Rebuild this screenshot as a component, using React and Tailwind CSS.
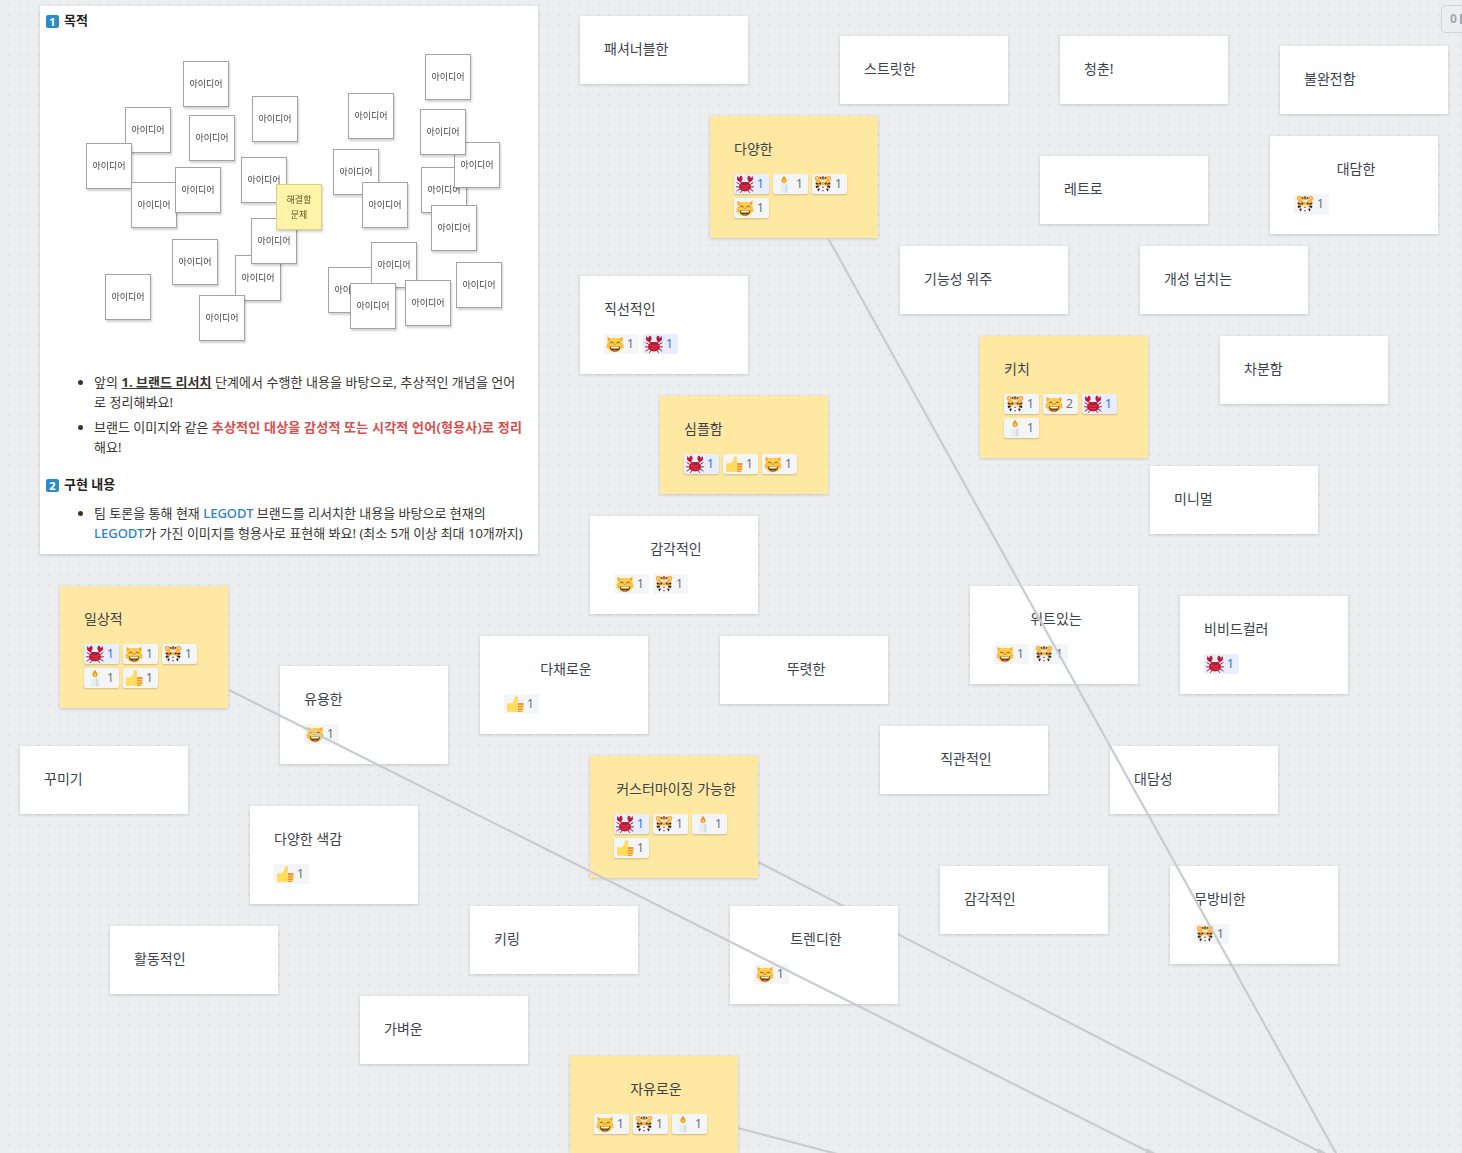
import React from 'react';

const Cat = () => (
  <svg viewBox="0 0 36 36" className="w-[18px] h-[18px] shrink-0">
    <path fill="#FFCC4D" d="M2 3 L4 20 L15 9 Z M34 3 L32 20 L21 9 Z" />
    <path fill="#F18F26" d="M4 6 L5 14 L11 9 Z M32 6 L31 14 L25 9 Z" />
    <ellipse cx="18" cy="20" rx="16" ry="14.5" fill="#FFCC4D" />
    <path fill="none" stroke="#664500" strokeWidth="1.8" strokeLinecap="round" d="M8 16c1.5-2.5 5-2.5 7 .5M28 16c-1.5-2.5-5-2.5-7 .5" />
    <path fill="#E75A70" d="M16 18.5h4l-2 2.2z" />
    <path fill="#664500" d="M7.5 22.5c3 1.5 18 1.5 21 0 0 7-5 10.5-10.5 10.5S7.500 29.500 7.500 22.500z" />
    <path fill="#fff" d="M9.500 23.500c4 .8 13 .8 17 0-.2 1.300-.6 2.300-1 3-4 .6-11 .6-15 0-.4-.7-.8-1.700-1-3z" />
    <path fill="#E8596E" d="M13 30.500c2.500-1.500 7.500-1.500 10 0-1.500 1.300-3.200 2-5 2s-3.500-.7-5-2z" />
    <path stroke="#F18F26" strokeWidth="1.200" strokeLinecap="round" d="M1 20l5 1.500M1 25l5-1M35 20l-5 1.500M35 25l-5-1" />
  </svg>
);

const Tiger = () => (
  <svg viewBox="0 0 36 36" className="w-[18px] h-[18px] shrink-0">
    <circle cx="6.500" cy="6.500" r="5" fill="#FFAC33" />
    <circle cx="29.500" cy="6.500" r="5" fill="#FFAC33" />
    <circle cx="6.500" cy="6.500" r="2.200" fill="#E1E8ED" />
    <circle cx="29.500" cy="6.500" r="2.200" fill="#E1E8ED" />
    <ellipse cx="18" cy="17" rx="14.500" ry="14.500" fill="#FFB347" />
    <path fill="#FFE8B6" d="M11 8c4-2 10-2 14 0l-2 6H13z" />
    <ellipse cx="18" cy="27.500" rx="9" ry="7.500" fill="#fff" />
    <path fill="#292F33" d="M16.500 3h3l-.5 6h-2zM11 5l3-1 1 6zM25 5l-3-1-1 6zM3.500 15l5 1.500 1.500 2.500-6.500-.5zM32.500 15l-5 1.500-1.500 2.500 6.500-.5zM3 22l5.500-1 1.500 2.500-5.500 3zM33 22l-5.500-1-1.500 2.500 5.500 3zM6.500 29l4-3 1 3-2.500 4zM29.500 29l-4-3-1 3 2.500 4z" />
    <circle cx="12.500" cy="17" r="2" fill="#292F33" />
    <circle cx="23.500" cy="17" r="2" fill="#292F33" />
    <path fill="#DD2E44" d="M15 23.500h6l-3 3zM15.500 30h5l-2.500 3.500z" />
  </svg>
);

const Crab = () => (
  <svg viewBox="0 0 36 36" className="w-[18px] h-[18px] shrink-0">
    <path fill="none" stroke="#BE1931" strokeWidth="2" strokeLinecap="round" d="M8 19L2 15.500M7 24l-6-.5M8 28l-6 4M28 19l6-3.500M29 24l6-.5M28 28l6 4M12 31l-3 4M24 31l3 4" />
    <path fill="none" stroke="#BE1931" strokeWidth="2.600" d="M12 18L8 11M24 18l4-7" />
    <path fill="#BE1931" d="M9 14C3 13 0 8 3.500 1.500c.5 2.500 1.500 4 3 4.500C7 4 8 2.500 10.500 1c3.500 3 4 9-1.500 13zM27 14c6-1 9-6 5.500-12.500-.5 2.500-1.500 4-3 4.500C29 4 28 2.500 25.500 1c-3.500 3-4 9 1.500 13z" />
    <ellipse cx="18" cy="23.500" rx="12" ry="9.500" fill="#BE1931" />
    <path fill="none" stroke="#E8596E" strokeWidth="1.300" d="M10 21c5 2 11 2 16 0M12 26.500c4 1.500 8 1.500 12 0" />
    <circle cx="14" cy="15.500" r="1.300" fill="#292F33" />
    <circle cx="22" cy="15.500" r="1.300" fill="#292F33" />
  </svg>
);

const Candle = () => (
  <svg viewBox="0 0 36 36" className="w-[18px] h-[18px] shrink-0">
    <path fill="#E6ECF1" d="M11 17h14v16c0 1.500-3 2.500-7 2.500s-7-1-7-2.500z" />
    <ellipse cx="18" cy="17" rx="7" ry="2.500" fill="#F5F8FA" />
    <path fill="#D5DEE4" d="M20 19h5v14c0 1-2 2-5 2.200z" />
    <path fill="#F4900C" d="M18 1c1 4 5 6 5 10.500 0 3-2.200 5-5 5s-5-2-5-5C13 7 17 5 18 1z" />
    <path fill="#FFCC4D" d="M18 7c.500 2 2.500 3 2.500 5.500 0 1.500-1 2.800-2.500 2.800s-2.500-1.300-2.500-2.800C15.500 10 17.500 9 18 7z" />
  </svg>
);

const Thumb = () => (
  <svg viewBox="0 0 36 36" className="w-[18px] h-[18px] shrink-0">
    <path fill="#FFDB5E" d="M2 19c0-1.500 1-2.500 2.500-2.500H10V34H5c-1.700 0-3-1.300-3-3zM10 17c4-2 7-6 7.500-11 .2-2 1-4 3-4 2.500 0 4 3 4 6 0 3-1 6-1.500 8H32c1.700 0 3 1.300 3 3v11c0 2.500-2 4-4 4H17c-3 0-5-1-7-2z" />
    <path fill="#EE9547" d="M24 16h9c1.300 0 2.300 1 2.300 2.300S34.300 20.500 33 20.500h-9zM24 22h10.500v1.800c0 .8-.7 1.400-1.500 1.400h-9zM24 27h10v1.500c0 .8-.7 1.500-1.500 1.500H24zM24 31.500h8.500c-.5 1.500-1.800 2.500-3.500 2.500h-5z" />
  </svg>
);

const emoji = { cat: Cat, tiger: Tiger, crab: Crab, candle: Candle, thumb: Thumb };

const Reaction = ({ type, count, flat }) => {
  const Icon = emoji[type];
  const isMine = type === 'crab';
  return (
    <div
      className={`flex items-center gap-[3px] w-[35px] h-[20px] pl-[2px] rounded-[2px] text-[12px] leading-none ${
        isMine ? 'bg-[#e9eeff] text-[#2f6fe4]' : 'bg-[#f3f5f7] text-[#6b7079]'
      } ${flat ? '' : 'shadow-[0_1px_2px_rgba(0,0,0,0.2)]'}`}
    >
      <Icon />
      <span>{count}</span>
    </div>
  );
};

const Note = ({ pos, title, center, yellow, reactions }) => (
  <div
    className={`absolute w-[168px] px-[24px] pt-[23px] shadow-[0_1px_3px_rgba(0,0,0,0.16)] ${pos} ${
      yellow ? 'bg-[#ffe8a1]' : 'bg-white'
    } ${reactions ? 'pb-[20px]' : 'pb-[25px]'}`}
  >
    <p className={`text-[14px] leading-[20px] text-[#3c424c] ${center ? 'text-center whitespace-nowrap translate-x-[2px]' : ''}`}>{title}</p>
    {reactions && (
      <div className="flex flex-wrap gap-[4px] mt-[15px]">
        {reactions.map(([type, count]) => (
          <Reaction key={type} type={type} count={count} flat={!yellow} />
        ))}
      </div>
    )}
  </div>
);

const notes = [
  { pos: 'left-[580px] top-[16px]', title: '패셔너블한' },
  { pos: 'left-[840px] top-[36px]', title: '스트릿한' },
  { pos: 'left-[1060px] top-[36px]', title: '청춘!' },
  { pos: 'left-[1280px] top-[46px]', title: '불완전함' },
  { pos: 'left-[710px] top-[116px]', title: '다양한', yellow: true, reactions: [['crab', 1], ['candle', 1], ['tiger', 1], ['cat', 1]] },
  { pos: 'left-[1270px] top-[136px]', title: '대담한', center: true, reactions: [['tiger', 1]] },
  { pos: 'left-[1040px] top-[156px]', title: '레트로' },
  { pos: 'left-[900px] top-[246px]', title: '기능성 위주' },
  { pos: 'left-[1140px] top-[246px]', title: '개성 넘치는' },
  { pos: 'left-[580px] top-[276px]', title: '직선적인', reactions: [['cat', 1], ['crab', 1]] },
  { pos: 'left-[980px] top-[336px]', title: '키치', yellow: true, reactions: [['tiger', 1], ['cat', 2], ['crab', 1], ['candle', 1]] },
  { pos: 'left-[1220px] top-[336px]', title: '차분함' },
  { pos: 'left-[660px] top-[396px]', title: '심플함', yellow: true, reactions: [['crab', 1], ['thumb', 1], ['cat', 1]] },
  { pos: 'left-[1150px] top-[466px]', title: '미니멀' },
  { pos: 'left-[590px] top-[516px]', title: '감각적인', center: true, reactions: [['cat', 1], ['tiger', 1]] },
  { pos: 'left-[970px] top-[586px]', title: '위트있는', center: true, reactions: [['cat', 1], ['tiger', 1]] },
  { pos: 'left-[1180px] top-[596px]', title: '비비드컬러', reactions: [['crab', 1]] },
  { pos: 'left-[60px] top-[586px]', title: '일상적', yellow: true, reactions: [['crab', 1], ['cat', 1], ['tiger', 1], ['candle', 1], ['thumb', 1]] },
  { pos: 'left-[280px] top-[666px]', title: '유용한', reactions: [['cat', 1]] },
  { pos: 'left-[480px] top-[636px]', title: '다채로운', center: true, reactions: [['thumb', 1]] },
  { pos: 'left-[720px] top-[636px]', title: '뚜렷한', center: true },
  { pos: 'left-[880px] top-[726px]', title: '직관적인', center: true },
  { pos: 'left-[1110px] top-[746px]', title: '대담성' },
  { pos: 'left-[20px] top-[746px]', title: '꾸미기' },
  { pos: 'left-[590px] top-[756px]', title: '커스터마이징 가능한', center: true, yellow: true, reactions: [['crab', 1], ['tiger', 1], ['candle', 1], ['thumb', 1]] },
  { pos: 'left-[250px] top-[806px]', title: '다양한 색감', reactions: [['thumb', 1]] },
  { pos: 'left-[940px] top-[866px]', title: '감각적인' },
  { pos: 'left-[1170px] top-[866px]', title: '무방비한', reactions: [['tiger', 1]] },
  { pos: 'left-[470px] top-[906px]', title: '키링' },
  { pos: 'left-[730px] top-[906px]', title: '트렌디한', center: true, reactions: [['cat', 1]] },
  { pos: 'left-[110px] top-[926px]', title: '활동적인' },
  { pos: 'left-[360px] top-[996px]', title: '가벼운' },
  { pos: 'left-[570px] top-[1056px]', title: '자유로운', center: true, yellow: true, reactions: [['cat', 1], ['tiger', 1], ['candle', 1]] },
];

// order matters here, later ones sit on top
const minis = [
  'left-[85px] top-[76px]',
  'left-[46px] top-[112px]',
  'left-[91px] top-[151px]',
  'left-[135px] top-[136px]',
  'left-[143px] top-[30px]',
  'left-[149px] top-[84px]',
  'left-[212px] top-[65px]',
  'left-[201px] top-[126px]',
  'left-[195px] top-[224px]',
  'left-[211px] top-[187px]',
  'left-[159px] top-[264px]',
  'left-[132px] top-[208px]',
  'left-[65px] top-[243px]',
  'left-[308px] top-[62px]',
  'left-[293px] top-[118px]',
  'left-[322px] top-[151px]',
  'left-[385px] top-[23px]',
  'left-[381px] top-[136px]',
  'left-[414px] top-[111px]',
  'left-[380px] top-[78px]',
  'left-[391px] top-[174px]',
  'left-[288px] top-[236px]',
  'left-[331px] top-[211px]',
  'left-[310px] top-[252px]',
  'left-[365px] top-[249px]',
  'left-[416px] top-[231px]',
];

const Badge = ({ n }) => (
  <span className="flex items-center justify-center w-[13px] h-[13px] rounded-[2px] bg-[#2b8ccb] text-white text-[11px] font-bold leading-none">
    {n}
  </span>
);

const Panel = () => (
  <div className="absolute left-[40px] top-[6px] w-[498px] h-[548px] bg-white shadow-[0_1px_3px_rgba(0,0,0,0.18)] text-[#37352f]">
    <div className="flex items-center gap-[5px] h-[20px] mt-[5px] ml-[6px] text-[13px] font-bold text-[#222]">
      <Badge n="1" />
      목적
    </div>
    <div className="relative h-[341px] blur-[0.3px]">
      {minis.map((pos) => (
        <div
          key={pos}
          className={`absolute w-[46px] h-[46px] flex items-center justify-center bg-white border border-[#a3a3a3] shadow-[1px_2px_2px_rgba(0,0,0,0.18)] text-[9px] text-[#444] ${pos}`}
        >
          아이디어
        </div>
      ))}
      <div className="absolute left-[236px] top-[153px] w-[46px] h-[46px] flex items-center justify-center text-center bg-[#fff3a8] border border-[#d9cf8a] shadow-[1px_2px_2px_rgba(0,0,0,0.18)] text-[9px] leading-[15px] text-[#5c5526]">
        해결할
        <br />
        문제
      </div>
    </div>
    <ul className="list-disc pl-[54px] text-[13px] leading-[20px] flex flex-col gap-[5px] whitespace-nowrap">
      <li className="tracking-[0.05px]">
        앞의 <strong className="underline">1. 브랜드 리서치</strong> 단계에서 수행한 내용을 바탕으로, 추상적인 개념을 언어
        <br />
        로 정리해봐요!
      </li>
      <li>
        브랜드 이미지와 같은 <strong className="text-[#dd4b4b] tracking-[0.2px]">추상적인 대상을 감성적 또는 시각적 언어(형용사)로 정리</strong>
        <br />
        해요!
      </li>
    </ul>
    <div className="flex items-center gap-[5px] h-[20px] mt-[18px] ml-[6px] text-[13px] font-bold text-[#222]">
      <Badge n="2" />
      구현 내용
    </div>
    <ul className="list-disc pl-[54px] mt-[8px] text-[13px] leading-[20px] whitespace-nowrap">
      <li>
        팀 토론을 통해 현재 <span className="text-[#2b7fd0] font-medium">LEGODT</span> 브랜드를 리서치한 내용을 바탕으로 현재의
        <br />
        <span className="text-[#2b7fd0] font-medium">LEGODT</span>가 가진 이미지를 형용사로 표현해 봐요! (최소 5개 이상 최대 10개까지)
      </li>
    </ul>
  </div>
);

const App = () => (
  <div className="relative w-[1462px] h-[1153px] overflow-hidden bg-[#ecedef] bg-[radial-gradient(circle,#e2e3e6_1px,transparent_1.2px)] bg-[size:10px_10px] bg-[position:4px_0px] font-['Noto_Sans','Noto_Sans_CJK_KR',sans-serif]">
    {/* connectors that run behind the notes */}
    <svg className="absolute inset-0 w-full h-full" viewBox="0 0 1462 1153" fill="none" stroke="#c9cbd1" strokeWidth="2.2">
      <path d="M758 862L1326 1155" />
      <path d="M738 1128L860 1160" />
      <polygon points="1318,1148 1326,1153 1332,1160 1316,1158" fill="#c9cbd1" stroke="none" />
    </svg>

    <Panel />
    {notes.map((note) => (
      <Note key={note.pos} {...note} />
    ))}

    {/* these two cross over the notes */}
    <svg className="absolute inset-0 w-full h-full pointer-events-none" viewBox="0 0 1462 1153" fill="none" stroke="#c9cbd1" strokeWidth="2.2">
      <path d="M828 238L1337 1155" />
      <path d="M229 690L1155 1155" />
      <polygon points="1147,1148 1155,1153 1160,1160 1144,1158" fill="#c9cbd1" stroke="none" />
    </svg>

    <div className="absolute left-[1441px] top-[5px] w-[60px] h-[28px] flex items-center gap-[3px] pl-[8px] bg-[#ecedf0] border border-[#d2d3d7] rounded-[4px] text-[12px] font-bold text-[#a5a7ac]">
      0
      <span className="w-[2px] h-[10px] bg-[#a5a7ac]" />
    </div>
  </div>
);

export default App;
